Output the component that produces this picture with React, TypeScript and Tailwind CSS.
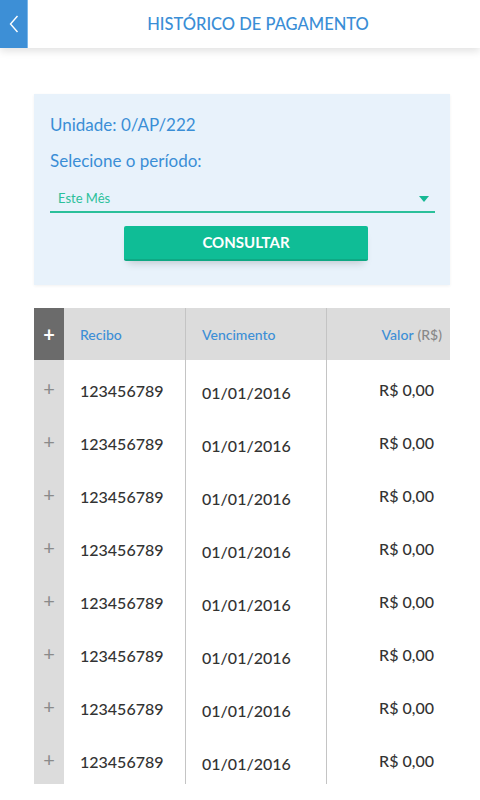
import React from "react";

const rows = Array.from({ length: 8 }, () => ({
  recibo: "123456789",
  vencimento: "01/01/2016",
  valor: "R$ 0,00",
}));

const Header: React.FC = () => (
  <div className="relative z-10 flex h-12 items-stretch bg-white shadow-[0_3px_8px_rgba(0,0,0,0.12)]">
    <button className="flex w-7 items-center justify-center border-r border-[#7ab7ea] bg-[#3d8fd6]">
      <svg width="12" height="20" viewBox="0 0 12 20" fill="none">
        <path d="M9.5 2 L2.5 10 L9.5 18" stroke="white" strokeWidth="1.4" />
      </svg>
    </button>
    <h1 className="flex flex-1 items-center justify-center pl-2 text-[16.5px] font-medium text-[#3a8ed6]">
      HISTÓRICO DE PAGAMENTO
    </h1>
  </div>
);

const FilterPanel: React.FC = () => (
  <div className="ml-[34px] mr-[30px] mt-[46px] bg-[#e8f2fb] pl-4 pr-[15px] pt-[21px] pb-[24px] shadow-[0_1px_3px_rgba(0,0,0,0.06)]">
    <p className="text-[17px] leading-5 text-[#3a8ed6]">Unidade: 0/AP/222</p>
    <p className="mt-4 text-[17px] leading-5 text-[#3a8ed6]">Selecione o período:</p>
    <div className="mt-[19px] flex h-[23px] items-start justify-between border-b-2 border-[#2bc09a] pl-2 pr-[6px]">
      <span className="text-[13px] leading-4 text-[#2bc09a]">Este Mês</span>
      <svg width="10" height="6" viewBox="0 0 10 6" className="mt-[6px]">
        <path d="M0 0 H10 L5 6 Z" fill="#16b894" />
      </svg>
    </div>
    <div className="mt-[13px] flex justify-center pl-[7px]">
      <button className="h-[35px] w-[244px] rounded-[2px] border-b-2 border-[#0fa884] bg-[#0fbd96] text-[15px] font-bold text-white shadow-[0_6px_8px_-4px_rgba(0,0,0,0.18)]">
        CONSULTAR
      </button>
    </div>
  </div>
);

const PaymentTable: React.FC = () => (
  <div className="ml-[34px] mr-[30px] mt-[23px]">
    <div className="grid h-[52px] grid-cols-[30px_121px_142px_1fr] bg-[#dcdcdc] text-[14px] font-medium">
      <div className="flex items-center justify-center bg-[#6b6b6b] text-[20px] font-bold text-white">+</div>
      <div className="flex items-center pl-4 text-[#3d8fd6]">Recibo</div>
      <div className="flex items-center border-x border-[#c4c4c4] pl-4 text-[#3d8fd6]">Vencimento</div>
      <div className="flex items-center justify-end pr-[8px]">
        <span className="text-[#3d8fd6]">Valor</span>
        <span className="ml-1 text-[#888888]">(R$)</span>
      </div>
    </div>
    {rows.map((r, i) => (
      <div key={i} className="grid h-[53px] grid-cols-[30px_121px_142px_1fr] text-[16px] text-[#333333]">
        <div className="flex items-center justify-center bg-[#dcdcdc] pt-[2px] text-[20px] text-[#8a8a8a]">+</div>
        <div className="flex items-center pl-4 pt-2 font-medium">{r.recibo}</div>
        <div className="flex items-center border-x border-[#c4c4c4] pl-4 pt-3 font-medium">{r.vencimento}</div>
        <div className="flex items-center justify-end pr-[16px] pt-[6px] font-medium">{r.valor}</div>
      </div>
    ))}
  </div>
);

export default function App() {
  return (
    <div className="min-h-[800px] bg-white font-['Lato','Liberation_Sans',sans-serif]">
      <Header />
      <FilterPanel />
      <PaymentTable />
    </div>
  );
}
